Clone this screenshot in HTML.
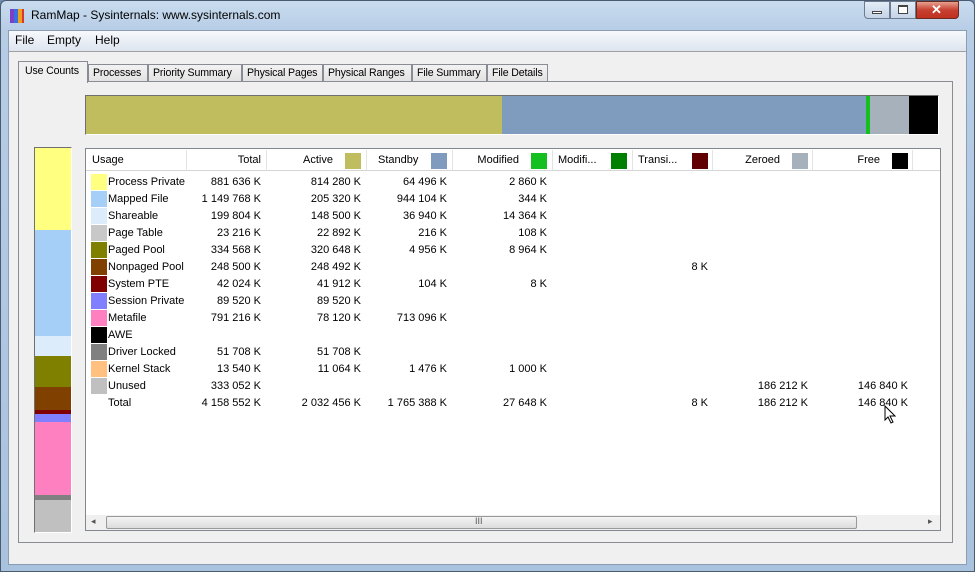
<!DOCTYPE html>
<html><head><meta charset="utf-8"><style>
*{margin:0;padding:0;box-sizing:border-box}
body{width:975px;height:572px;overflow:hidden;background:#6d8bb0;font-family:"Liberation Sans",sans-serif;font-size:11px;color:#000;position:relative}
.a{position:absolute}
.r{position:absolute;text-align:right;white-space:nowrap}
.l{position:absolute;white-space:nowrap}
.t{position:absolute;white-space:nowrap;font-size:10.6px;letter-spacing:-0.15px}
.sw{position:absolute;width:16px;height:16px}
</style></head><body>
<div class="a" style="left:0;top:0;width:975px;height:572px;background:linear-gradient(#c9dcef,#b7cde6 30px,#a9c2de);border:1px solid #4a5b70;border-radius:6px 6px 0 0"></div>
<div class="a" style="left:10px;top:9px;width:4px;height:14px;background:#7b3fc8"></div>
<div class="a" style="left:14px;top:9px;width:4px;height:14px;background:#3a6fe0"></div>
<div class="a" style="left:18px;top:9px;width:4px;height:14px;background:#f0a020"></div>
<div class="a" style="left:22px;top:9px;width:2px;height:14px;background:#d83a2a"></div>
<div class="l" style="left:31px;top:8px;font-size:12px">RamMap - Sysinternals: www.sysinternals.com</div>
<div class="a" style="left:864px;top:1px;width:26px;height:18px;border:1px solid #6b7c92;border-radius:0 0 0 4px;background:linear-gradient(#e4edf7,#c4d3e6)"></div>
<div class="a" style="left:872px;top:11px;width:10px;height:3px;border:1px solid #444;background:#fff"></div>
<div class="a" style="left:890px;top:1px;width:26px;height:18px;border:1px solid #6b7c92;background:linear-gradient(#e4edf7,#c4d3e6)"></div>
<div class="a" style="left:898px;top:5px;width:10px;height:9px;border:1px solid #444;border-top-width:2px;background:#fff"></div>
<div class="a" style="left:916px;top:1px;width:43px;height:18px;border:1px solid #6b2a20;border-radius:0 0 4px 0;background:linear-gradient(#e8a090,#c84030 50%,#c03020)"></div>
<div class="l" style="left:931px;top:2px;color:#fff;font-weight:bold;font-size:13px">✕</div>
<div class="a" style="left:8px;top:30px;width:959px;height:535px;background:#f0f0f0;border:1px solid #8c9db3"></div>
<div class="a" style="left:9px;top:31px;width:957px;height:20px;background:linear-gradient(#f7f9fc,#dde5ef)"></div>
<div class="l" style="left:15px;top:33px;font-size:12px">File</div>
<div class="l" style="left:47px;top:33px;font-size:12px">Empty</div>
<div class="l" style="left:95px;top:33px;font-size:12px">Help</div>
<div class="a" style="left:9px;top:51px;width:957px;height:1px;background:#a0a0a0"></div>
<div class="a" style="left:18px;top:81px;width:935px;height:462px;background:#fff;border:1px solid #898c95"></div>
<div class="a" style="left:19px;top:82px;width:933px;height:460px;background:#f0f0f0"></div>
<div class="a" style="left:88px;top:64px;width:60px;height:18px;border:1px solid #898c95;background:linear-gradient(#f2f2f2,#e3e3e3)"></div><div class="t" style="left:93px;top:67px">Processes</div>
<div class="a" style="left:148px;top:64px;width:94px;height:18px;border:1px solid #898c95;background:linear-gradient(#f2f2f2,#e3e3e3)"></div><div class="t" style="left:153px;top:67px">Priority Summary</div>
<div class="a" style="left:242px;top:64px;width:81px;height:18px;border:1px solid #898c95;background:linear-gradient(#f2f2f2,#e3e3e3)"></div><div class="t" style="left:247px;top:67px">Physical Pages</div>
<div class="a" style="left:323px;top:64px;width:89px;height:18px;border:1px solid #898c95;background:linear-gradient(#f2f2f2,#e3e3e3)"></div><div class="t" style="left:328px;top:67px">Physical Ranges</div>
<div class="a" style="left:412px;top:64px;width:75px;height:18px;border:1px solid #898c95;background:linear-gradient(#f2f2f2,#e3e3e3)"></div><div class="t" style="left:417px;top:67px">File Summary</div>
<div class="a" style="left:487px;top:64px;width:61px;height:18px;border:1px solid #898c95;background:linear-gradient(#f2f2f2,#e3e3e3)"></div><div class="t" style="left:492px;top:67px">File Details</div>
<div class="a" style="left:18px;top:61px;width:70px;height:22px;border:1px solid #898c95;border-bottom:none;background:#f0f0f0"></div><div class="t" style="left:25px;top:65px">Use Counts</div>
<div class="a" style="left:85px;top:95px;width:854px;height:40px;border:1px solid #707070;border-right-color:#fff;border-bottom-color:#fff"></div>
<div class="a" style="left:86px;top:96px;width:416px;height:38px;background:#bfbd5e"></div>
<div class="a" style="left:502px;top:96px;width:364px;height:38px;background:#7f9bbd"></div>
<div class="a" style="left:866px;top:96px;width:4px;height:38px;background:#13c020"></div>
<div class="a" style="left:870px;top:96px;width:39px;height:38px;background:#a7b1bc"></div>
<div class="a" style="left:909px;top:96px;width:29px;height:38px;background:#000"></div>
<div class="a" style="left:34px;top:147px;width:38px;height:386px;border:1px solid #707070;border-right-color:#fff;border-bottom-color:#fff"></div>
<div class="a" style="left:35px;top:148px;width:36px;height:82px;background:#ffff80"></div>
<div class="a" style="left:35px;top:230px;width:36px;height:106px;background:#a6cff8"></div>
<div class="a" style="left:35px;top:336px;width:36px;height:20px;background:#dcecfb"></div>
<div class="a" style="left:35px;top:356px;width:36px;height:31px;background:#808000"></div>
<div class="a" style="left:35px;top:387px;width:36px;height:23px;background:#804000"></div>
<div class="a" style="left:35px;top:410px;width:36px;height:4px;background:#800000"></div>
<div class="a" style="left:35px;top:414px;width:36px;height:8px;background:#8080ff"></div>
<div class="a" style="left:35px;top:422px;width:36px;height:73px;background:#ff80c0"></div>
<div class="a" style="left:35px;top:495px;width:36px;height:5px;background:#808080"></div>
<div class="a" style="left:35px;top:500px;width:36px;height:32px;background:#c0c0c0"></div>
<div class="a" style="left:85px;top:148px;width:856px;height:383px;background:#fff;border:1px solid #828790"></div>
<div class="a" style="left:86px;top:149px;width:854px;height:22px;background:#fff;border-bottom:1px solid #d5d5d5"></div>
<div class="a" style="left:186px;top:150px;width:1px;height:20px;background:#e3e3e3"></div>
<div class="a" style="left:266px;top:150px;width:1px;height:20px;background:#e3e3e3"></div>
<div class="a" style="left:366px;top:150px;width:1px;height:20px;background:#e3e3e3"></div>
<div class="a" style="left:452px;top:150px;width:1px;height:20px;background:#e3e3e3"></div>
<div class="a" style="left:552px;top:150px;width:1px;height:20px;background:#e3e3e3"></div>
<div class="a" style="left:632px;top:150px;width:1px;height:20px;background:#e3e3e3"></div>
<div class="a" style="left:712px;top:150px;width:1px;height:20px;background:#e3e3e3"></div>
<div class="a" style="left:812px;top:150px;width:1px;height:20px;background:#e3e3e3"></div>
<div class="a" style="left:912px;top:150px;width:1px;height:20px;background:#e3e3e3"></div>
<div class="l" style="left:92px;top:154px">Usage</div>
<div class="r" style="left:190px;width:71px;top:154px">Total</div>
<div class="r" style="left:270px;width:63px;top:154px">Active</div><div class="sw" style="left:345px;top:153px;background:#bfbd5e"></div>
<div class="l" style="left:378px;top:154px">Standby</div><div class="sw" style="left:431px;top:153px;background:#7f9bbd"></div>
<div class="r" style="left:455px;width:64px;top:154px">Modified</div><div class="sw" style="left:531px;top:153px;background:#13c020"></div>
<div class="l" style="left:558px;top:154px">Modifi...</div><div class="sw" style="left:611px;top:153px;background:#008000"></div>
<div class="l" style="left:638px;top:154px">Transi...</div><div class="sw" style="left:692px;top:153px;background:#600000"></div>
<div class="r" style="left:715px;width:65px;top:154px">Zeroed</div><div class="sw" style="left:792px;top:153px;background:#a7b1bc"></div>
<div class="r" style="left:815px;width:65px;top:154px">Free</div><div class="sw" style="left:892px;top:153px;background:#000"></div>

<div class="sw" style="left:91px;top:174px;background:#ffff80"></div><div class="l" style="left:108px;top:176px">Process Private</div>
<div class="r" style="left:180px;width:81px;top:176px">881 636 K</div><div class="r" style="left:270px;width:91px;top:176px">814 280 K</div><div class="r" style="left:370px;width:77px;top:176px">64 496 K</div><div class="r" style="left:456px;width:91px;top:176px">2 860 K</div>

<div class="sw" style="left:91px;top:191px;background:#a6cff8"></div><div class="l" style="left:108px;top:193px">Mapped File</div>
<div class="r" style="left:180px;width:81px;top:193px">1 149 768 K</div><div class="r" style="left:270px;width:91px;top:193px">205 320 K</div><div class="r" style="left:370px;width:77px;top:193px">944 104 K</div><div class="r" style="left:456px;width:91px;top:193px">344 K</div>

<div class="sw" style="left:91px;top:208px;background:#dcecfb"></div><div class="l" style="left:108px;top:210px">Shareable</div>
<div class="r" style="left:180px;width:81px;top:210px">199 804 K</div><div class="r" style="left:270px;width:91px;top:210px">148 500 K</div><div class="r" style="left:370px;width:77px;top:210px">36 940 K</div><div class="r" style="left:456px;width:91px;top:210px">14 364 K</div>

<div class="sw" style="left:91px;top:225px;background:#c8c8c8"></div><div class="l" style="left:108px;top:227px">Page Table</div>
<div class="r" style="left:180px;width:81px;top:227px">23 216 K</div><div class="r" style="left:270px;width:91px;top:227px">22 892 K</div><div class="r" style="left:370px;width:77px;top:227px">216 K</div><div class="r" style="left:456px;width:91px;top:227px">108 K</div>

<div class="sw" style="left:91px;top:242px;background:#808000"></div><div class="l" style="left:108px;top:244px">Paged Pool</div>
<div class="r" style="left:180px;width:81px;top:244px">334 568 K</div><div class="r" style="left:270px;width:91px;top:244px">320 648 K</div><div class="r" style="left:370px;width:77px;top:244px">4 956 K</div><div class="r" style="left:456px;width:91px;top:244px">8 964 K</div>

<div class="sw" style="left:91px;top:259px;background:#804000"></div><div class="l" style="left:108px;top:261px">Nonpaged Pool</div>
<div class="r" style="left:180px;width:81px;top:261px">248 500 K</div><div class="r" style="left:270px;width:91px;top:261px">248 492 K</div><div class="r" style="left:630px;width:78px;top:261px">8 K</div>

<div class="sw" style="left:91px;top:276px;background:#800000"></div><div class="l" style="left:108px;top:278px">System PTE</div>
<div class="r" style="left:180px;width:81px;top:278px">42 024 K</div><div class="r" style="left:270px;width:91px;top:278px">41 912 K</div><div class="r" style="left:370px;width:77px;top:278px">104 K</div><div class="r" style="left:456px;width:91px;top:278px">8 K</div>

<div class="sw" style="left:91px;top:293px;background:#8080ff"></div><div class="l" style="left:108px;top:295px">Session Private</div>
<div class="r" style="left:180px;width:81px;top:295px">89 520 K</div><div class="r" style="left:270px;width:91px;top:295px">89 520 K</div>

<div class="sw" style="left:91px;top:310px;background:#ff80c0"></div><div class="l" style="left:108px;top:312px">Metafile</div>
<div class="r" style="left:180px;width:81px;top:312px">791 216 K</div><div class="r" style="left:270px;width:91px;top:312px">78 120 K</div><div class="r" style="left:370px;width:77px;top:312px">713 096 K</div>

<div class="sw" style="left:91px;top:327px;background:#000"></div><div class="l" style="left:108px;top:329px">AWE</div>

<div class="sw" style="left:91px;top:344px;background:#808080"></div><div class="l" style="left:108px;top:346px">Driver Locked</div>
<div class="r" style="left:180px;width:81px;top:346px">51 708 K</div><div class="r" style="left:270px;width:91px;top:346px">51 708 K</div>

<div class="sw" style="left:91px;top:361px;background:#ffc080"></div><div class="l" style="left:108px;top:363px">Kernel Stack</div>
<div class="r" style="left:180px;width:81px;top:363px">13 540 K</div><div class="r" style="left:270px;width:91px;top:363px">11 064 K</div><div class="r" style="left:370px;width:77px;top:363px">1 476 K</div><div class="r" style="left:456px;width:91px;top:363px">1 000 K</div>

<div class="sw" style="left:91px;top:378px;background:#c0c0c0"></div><div class="l" style="left:108px;top:380px">Unused</div>
<div class="r" style="left:180px;width:81px;top:380px">333 052 K</div><div class="r" style="left:720px;width:88px;top:380px">186 212 K</div><div class="r" style="left:820px;width:88px;top:380px">146 840 K</div>

<div class="l" style="left:108px;top:397px">Total</div>
<div class="r" style="left:180px;width:81px;top:397px">4 158 552 K</div><div class="r" style="left:270px;width:91px;top:397px">2 032 456 K</div><div class="r" style="left:370px;width:77px;top:397px">1 765 388 K</div><div class="r" style="left:456px;width:91px;top:397px">27 648 K</div><div class="r" style="left:630px;width:78px;top:397px">8 K</div><div class="r" style="left:720px;width:88px;top:397px">186 212 K</div><div class="r" style="left:820px;width:88px;top:397px">146 840 K</div>
<svg class="a" style="left:884px;top:405px" width="14" height="20"><path d="M1 1 L1 15 L4 12 L7 18 L9 17 L6 11 L11 11 Z" fill="#fff" stroke="#000" stroke-width="1"/></svg>
<div class="a" style="left:86px;top:515px;width:854px;height:15px;background:#f0f0f0"></div>
<div class="l" style="left:91px;top:516px;font-size:9px;color:#555">◂</div>
<div class="l" style="left:928px;top:516px;font-size:9px;color:#555">▸</div>
<div class="a" style="left:106px;top:516px;width:751px;height:13px;border:1px solid #999;border-radius:2px;background:linear-gradient(#f4f4f4,#dcdcdc)"></div>
<div class="l" style="left:475px;top:516px;font-size:9px;color:#555">III</div>
</body></html>
